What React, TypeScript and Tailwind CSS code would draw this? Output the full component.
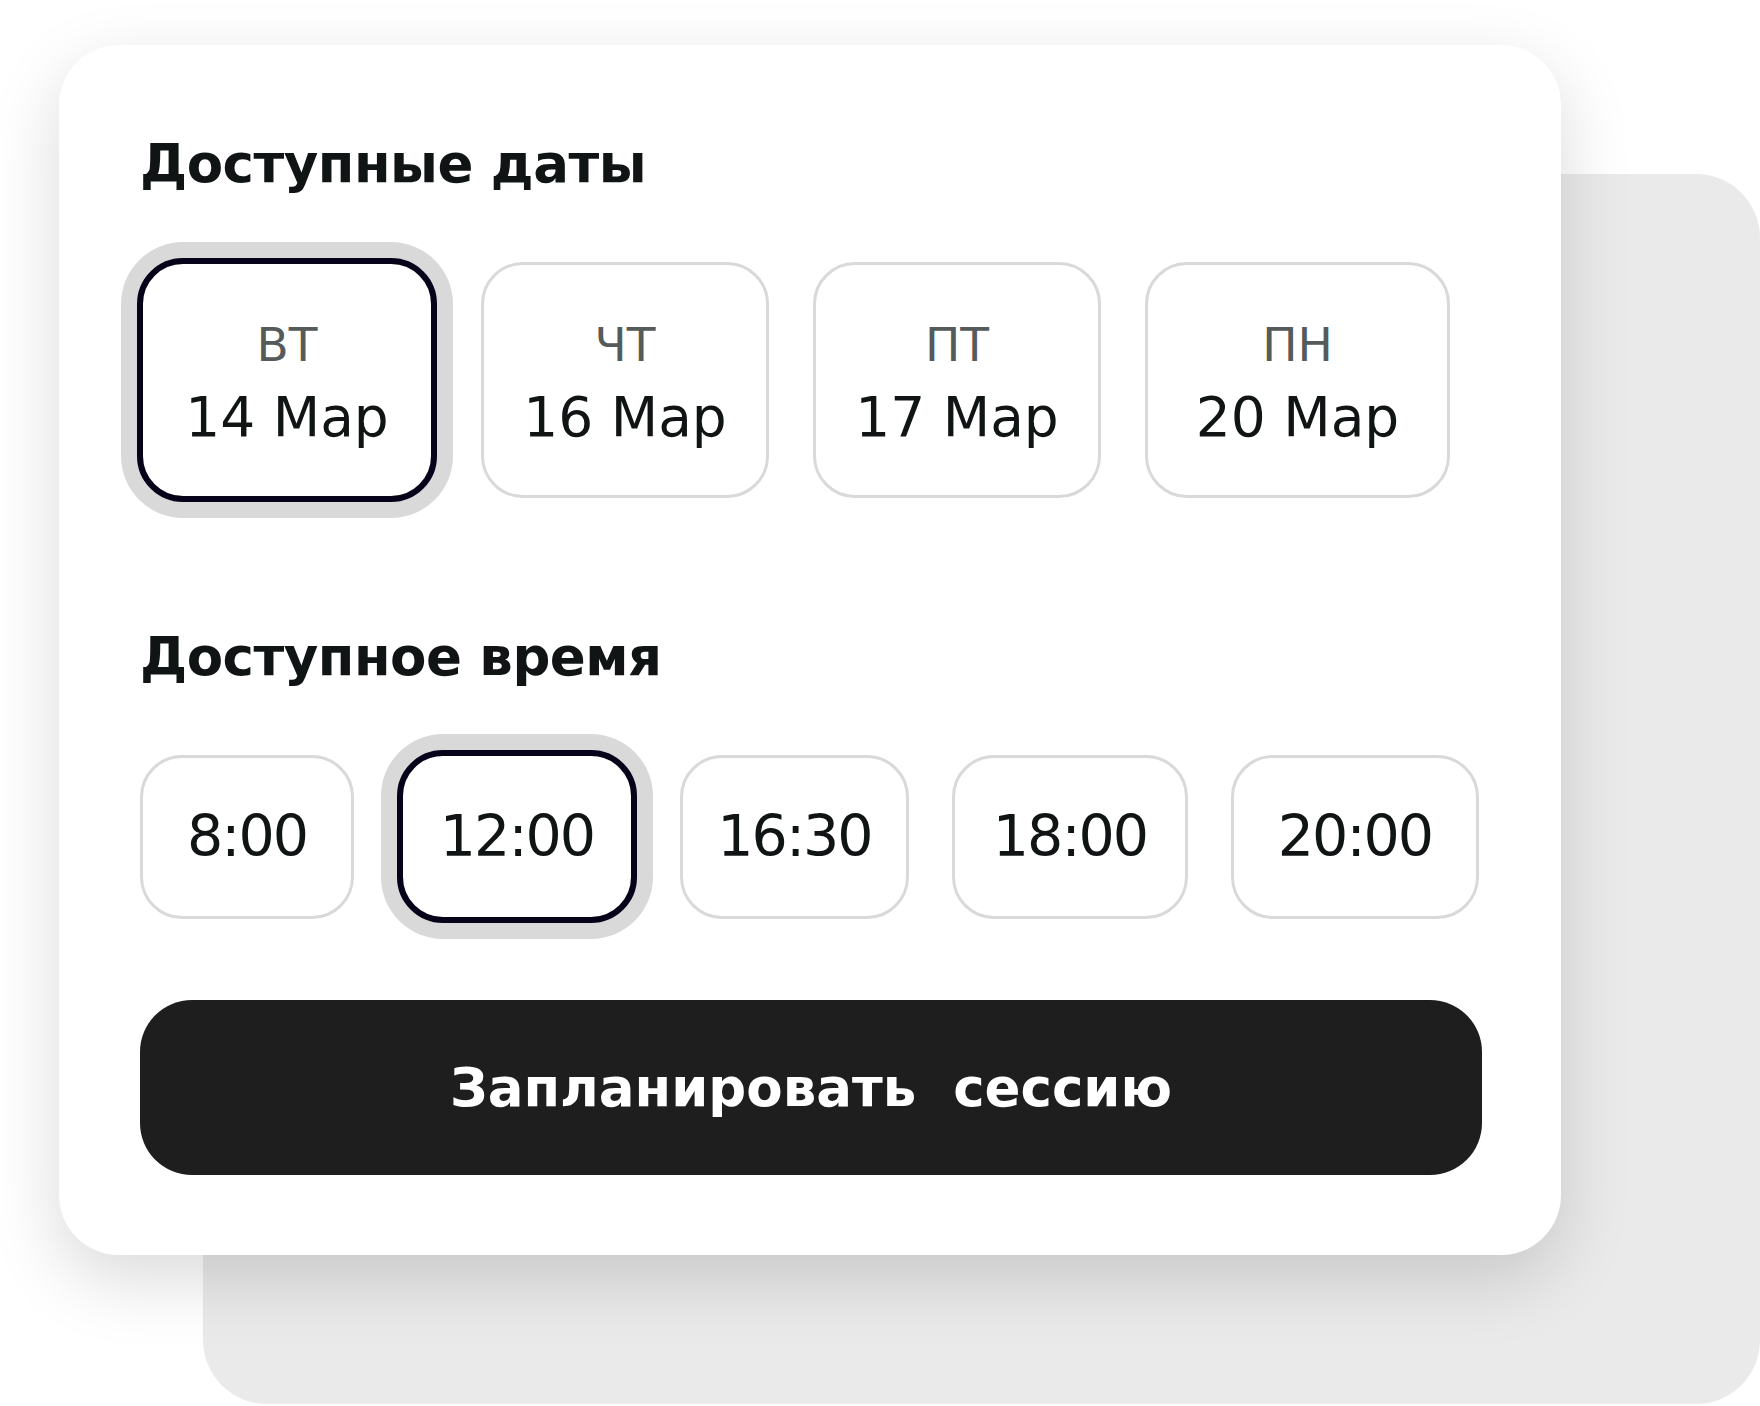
import React from "react";

const dates = [
  { day: "ВТ", date: "14 Мар", w: "w-[300px]" },
  { day: "ЧТ", date: "16 Мар", w: "w-[288px]" },
  { day: "ПТ", date: "17 Мар", w: "w-[288px]" },
  { day: "ПН", date: "20 Мар", w: "w-[305px]" },
];

const times = [
  { t: "8:00", w: "w-[214px]" },
  { t: "12:00", w: "w-[240px]" },
  { t: "16:30", w: "w-[229px]" },
  { t: "18:00", w: "w-[236px]" },
  { t: "20:00", w: "w-[248px]" },
];

export default function App() {
  const selectedDate = 0;
  const selectedTime = 1;

  return (
    <div className="relative w-[1760px] h-[1406px] bg-white overflow-hidden font-['DejaVu_Sans',sans-serif] pl-[59px] pt-[45px]">
      {/* back panel */}
      <div className="absolute left-[203px] top-[174px] right-0 bottom-[2px] rounded-[64px] bg-[#eaeaea]" />

      <div className="relative w-[1502px] h-[1210px] rounded-[60px] bg-white shadow-[0_24px_70px_rgba(0,0,0,0.15)] pl-[81px] pr-[79px] pt-[92px] pb-[80px] flex flex-col">
        <h2 className="text-[53px] leading-none font-bold text-[#101414] tracking-[-0.5px]">
          Доступные даты
        </h2>

        <div className="mt-[68px] flex items-center gap-[44px] -ml-[3px]">
          {dates.map((d, i) => {
            const active = i === selectedDate;
            return (
              <button
                key={d.date}
                className={
                  (active
                    ? "h-[244px] rounded-[46px] border-[6px] border-[#06021a] shadow-[0_0_0_16px_#d9d9d9]"
                    : "h-[236px] rounded-[42px] border-[3px] border-[#d9d9d9]") +
                  " " +
                  d.w +
                  " shrink-0 bg-white flex flex-col items-center justify-center gap-[22px] pt-[5px]"
                }
              >
                <span className="text-[47px] leading-none text-[#555a5a]">{d.day}</span>
                <span className="text-[55px] leading-none text-[#101414]">{d.date}</span>
              </button>
            );
          })}
        </div>

        <h2 className="mt-[128px] text-[53px] leading-none font-bold text-[#101414] tracking-[-0.5px]">
          Доступное время
        </h2>

        <div className="mt-[67px] flex items-center gap-[43px]">
          {times.map((x, i) => {
            const active = i === selectedTime;
            return (
              <button
                key={x.t}
                className={
                  (active
                    ? "h-[173px] rounded-[46px] border-[6px] border-[#06021a] shadow-[0_0_0_16px_#d9d9d9]"
                    : "h-[164px] rounded-[42px] border-[3px] border-[#d9d9d9]") +
                  " " +
                  x.w +
                  " shrink-0 bg-white flex items-center justify-center"
                }
              >
                <span className="text-[57px] leading-none text-[#101414] tracking-[-2px]">{x.t}</span>
              </button>
            );
          })}
        </div>

        <button className="mt-auto h-[175px] w-full rounded-[52px] bg-[#1e1e1e] text-white text-[53px] leading-none font-bold whitespace-pre">
          {"Запланировать  сессию"}
        </button>
      </div>
    </div>
  );
}
